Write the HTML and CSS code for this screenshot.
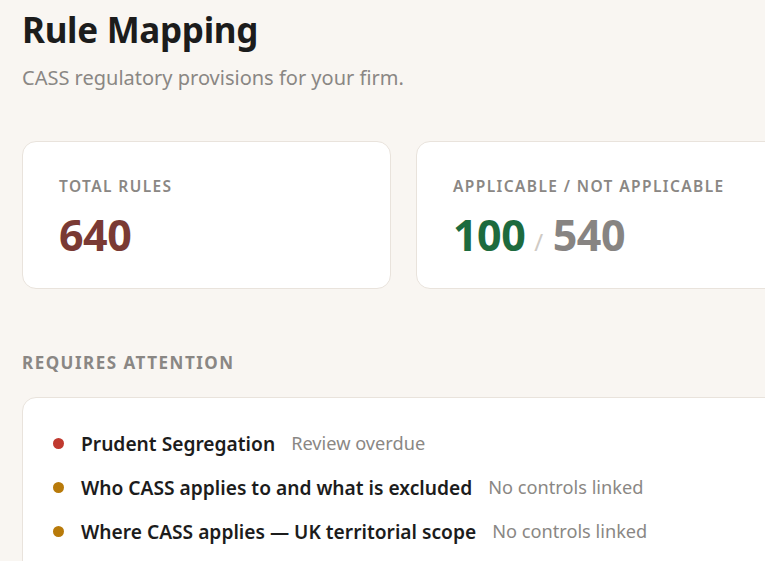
FILE: index.html
```html
<!DOCTYPE html>
<html lang="en">
<head>
    <meta charset="UTF-8">
    <meta name="viewport" content="width=device-width, initial-scale=1.0">
    <title>Rule Mapping</title>
    <link rel="stylesheet" href="styles.css">
</head>
<body>
    <div class="page">
        <h1>Rule Mapping</h1>
        <p class="subtitle">CASS regulatory provisions for your firm.</p>

        <div class="stats-grid">
            <div class="stat-card">
                <div class="stat-label">Total rules</div>
                <div class="stat-value total">640</div>
            </div>
            <div class="stat-card">
                <div class="stat-label">Applicable / Not applicable</div>
                <div class="stat-value split">
                    <span class="applicable">100</span>
                    <span class="sep">/</span>
                    <span class="not-applicable">540</span>
                </div>
            </div>
        </div>

        <h2 class="section-label">Requires attention</h2>

        <div class="attention-card">
            <ul class="attention-list">
                <li>
                    <span class="dot red"></span>
                    <span class="rule-name">Prudent Segregation</span>
                    <span class="rule-note">Review overdue</span>
                </li>
                <li>
                    <span class="dot amber"></span>
                    <span class="rule-name">Who CASS applies to and what is excluded</span>
                    <span class="rule-note">No controls linked</span>
                </li>
                <li>
                    <span class="dot amber"></span>
                    <span class="rule-name">Where CASS applies — UK territorial scope</span>
                    <span class="rule-note">No controls linked</span>
                </li>
            </ul>
        </div>
    </div>
</body>
</html>
```

FILE: styles.css
```css
html, body {
    margin: 0;
    padding: 0;
    overflow: hidden;
}
body {
    font-family: 'Noto Sans', 'Open Sans', Arial, sans-serif;
    color: #1c1c1c;
    background-color: #f9f6f2;
}
.page {
    padding: 6px 0 0 22px;
    width: 1200px;
}
h1 {
    font-size: 35px;
    font-weight: 700;
    margin: 0;
    line-height: 48px;
    letter-spacing: -0.3px;
}
.subtitle {
    font-size: 20px;
    color: #8a8784;
    margin: 10px 0 0;
    line-height: 28px;
}
.stats-grid {
    display: flex;
    gap: 25px;
    margin-top: 49px;
}
.stat-card {
    width: 369px;
    height: 148px;
    box-sizing: border-box;
    background-color: #fff;
    border: 1px solid #e9e3dc;
    border-radius: 14px;
    padding: 33px 36px 0;
}
.stat-label {
    font-size: 15.5px;
    font-weight: 600;
    letter-spacing: 1.4px;
    text-transform: uppercase;
    color: #8a8784;
    line-height: 22px;
}
.stat-value {
    font-size: 43px;
    font-weight: 700;
    line-height: 56px;
    margin-top: 10px;
    letter-spacing: -0.5px;
}
.stat-value.split {
    display: flex;
    align-items: baseline;
}
.total {
    color: #7a3a34;
}
.applicable {
    color: #1d6b3e;
}
.sep {
    font-size: 24px;
    font-weight: 400;
    color: #cfcac4;
    margin: 0 10px 0 9px;
}
.not-applicable {
    color: #878482;
}
.section-label {
    font-size: 17px;
    font-weight: 700;
    letter-spacing: 1.5px;
    text-transform: uppercase;
    color: #8a8784;
    margin: 62px 0 0;
    line-height: 24px;
}
.attention-card {
    width: 780px;
    box-sizing: border-box;
    margin-top: 22px;
    background-color: #fff;
    border: 1px solid #e9e3dc;
    border-radius: 14px;
    padding: 23px 30px;
}
.attention-list {
    list-style: none;
    margin: 0;
    padding: 0;
}
.attention-list li {
    display: flex;
    align-items: center;
    height: 44px;
}
.dot {
    width: 11px;
    height: 11px;
    border-radius: 50%;
    margin-right: 17px;
    flex-shrink: 0;
}
.dot.red {
    background-color: #c0392f;
}
.dot.amber {
    background-color: #b87a0a;
}
.rule-name {
    font-size: 19.2px;
    font-weight: 600;
    color: #1c1c1c;
}
.rule-note {
    font-size: 18.2px;
    color: #8a8784;
    margin-left: 16px;
}
```
